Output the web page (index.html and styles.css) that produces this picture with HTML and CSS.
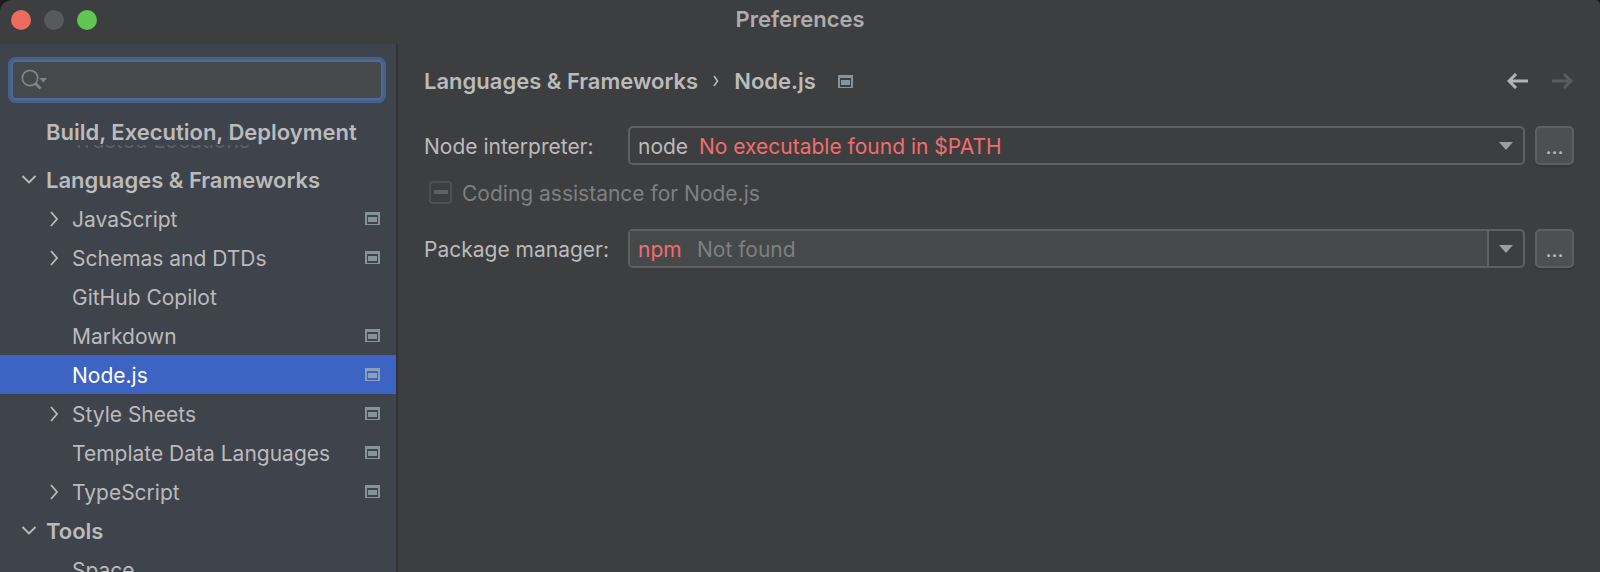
FILE: index.html
```html
<!DOCTYPE html>
<html lang="en">
<head>
<meta charset="utf-8">
<title>Preferences</title>
<link rel="stylesheet" href="styles.css">
</head>
<body>
<svg class="symbols" aria-hidden="true">
  <symbol id="project" viewBox="0 0 15 13"><path fill-rule="evenodd" d="M0 0h15v13H0zM2 3v9h11V3z"/><path d="M3 5h9v5H3z"/></symbol>
  <symbol id="right" viewBox="0 0 14 16"><path d="M4 1l6 7-6 7" fill="none" stroke="currentColor" stroke-width="1.800"/></symbol>
  <symbol id="down" viewBox="0 0 16 14"><path d="M1.500 4l6.500 6.500L14.500 4" fill="none" stroke="currentColor" stroke-width="1.800"/></symbol>
</svg>
<div class="window">
  <header class="titlebar">
    <div class="lights">
      <button class="light close" aria-label="Close"></button>
      <button class="light minimize" aria-label="Minimize" disabled></button>
      <button class="light maximize" aria-label="Zoom"></button>
    </div>
    <h1 class="title">Preferences</h1>
  </header>
  <div class="body">
    <aside class="sidebar">
      <div class="search">
        <svg class="search-icon" viewBox="0 0 28 22" aria-hidden="true"><circle cx="9" cy="9" r="7.700" fill="none" stroke="currentColor" stroke-width="1.700"/><path d="M14.500 14.500l5 5" stroke="currentColor" stroke-width="2.600"/><path d="M18.500 9h7.500l-3.750 4.500z" fill="currentColor"/></svg>
        <input class="search-input" type="text" aria-label="Search settings">
      </div>
      <nav class="tree" aria-label="Settings">
        <div class="sticky">Build, Execution, Deployment</div>
        <ul class="rows">
          <li class="row leaf faded"><a href="#">Trusted Locations</a></li>
          <li class="row group"><svg class="arrow-down"><use href="#down"/></svg><a href="#">Languages &amp; Frameworks</a></li>
          <li class="row leaf"><svg class="arrow-right"><use href="#right"/></svg><a href="#">JavaScript</a><svg class="project"><use href="#project"/></svg></li>
          <li class="row leaf"><svg class="arrow-right"><use href="#right"/></svg><a href="#">Schemas and DTDs</a><svg class="project"><use href="#project"/></svg></li>
          <li class="row leaf"><a href="#">GitHub Copilot</a></li>
          <li class="row leaf"><a href="#">Markdown</a><svg class="project"><use href="#project"/></svg></li>
          <li class="row leaf selected"><a href="#" aria-current="page">Node.js</a><svg class="project"><use href="#project"/></svg></li>
          <li class="row leaf"><svg class="arrow-right"><use href="#right"/></svg><a href="#">Style Sheets</a><svg class="project"><use href="#project"/></svg></li>
          <li class="row leaf"><a href="#">Template Data Languages</a><svg class="project"><use href="#project"/></svg></li>
          <li class="row leaf"><svg class="arrow-right"><use href="#right"/></svg><a href="#">TypeScript</a><svg class="project"><use href="#project"/></svg></li>
          <li class="row group"><svg class="arrow-down"><use href="#down"/></svg><a href="#">Tools</a></li>
          <li class="row leaf"><a href="#">Space</a></li>
        </ul>
      </nav>
    </aside>
    <main class="content">
      <div class="heading">
        <a class="crumb" href="#">Languages &amp; Frameworks</a>
        <svg class="crumb-sep" viewBox="0 0 6 12" aria-hidden="true"><path d="M1 1l3.500 5L1 11" fill="none" stroke="currentColor" stroke-width="1.600"/></svg>
        <h2 class="crumb">Node.js</h2>
        <svg class="project crumb-project"><use href="#project"/></svg>
        <div class="history">
          <button class="nav" aria-label="Back"><svg viewBox="0 0 22 16"><path d="M21 8H2M9 1L2 8l7 7" fill="none" stroke="currentColor" stroke-width="3"/></svg></button>
          <button class="nav" aria-label="Forward" disabled><svg viewBox="0 0 22 16"><path d="M1 8h19M13 1l7 7-7 7" fill="none" stroke="currentColor" stroke-width="3"/></svg></button>
        </div>
      </div>
      <form class="form">
        <label for="node">Node interpreter:</label>
        <div class="combo">
          <select id="node"><option>node</option></select>
          <span class="hint error">No executable found in $PATH</span>
          <svg class="caret" viewBox="0 0 14 8"><path d="M0 0h14L7 8z"/></svg>
        </div>
        <button class="more" type="button" aria-label="Browse interpreters">...</button>
        <div class="check">
          <input type="checkbox" id="assist" disabled>
          <label for="assist">Coding assistance for Node.js</label>
        </div>
        <label for="pm">Package manager:</label>
        <div class="combo">
          <input id="pm" type="text" value="npm">
          <span class="hint muted">Not found</span>
          <button class="open" type="button" aria-label="Show package managers"><svg viewBox="0 0 14 8"><path d="M0 0h14L7 8z"/></svg></button>
        </div>
        <button class="more" type="button" aria-label="Browse package managers">...</button>
      </form>
    </main>
  </div>
</div>
</body>
</html>
```
FILE: styles.css
```css
* { box-sizing: border-box; }
body { margin: 0; background: #1c1c1d; }
body, input, select, button { font: 400 21px/26px Inter, "Liberation Sans", sans-serif; color: #bbbbbb; }
button { padding: 0; border: 0; background: none; }
a { color: inherit; text-decoration: none; }
h1, h2 { margin: 0; font: inherit; }
.symbols { display: none; }

.window { display: flex; flex-direction: column; height: 100vh; overflow: hidden; background: #3d3e40; border-radius: 12px 5px 0 0; }
.titlebar { position: relative; flex: none; height: 44px; padding-bottom: 6px; display: flex; align-items: center; justify-content: center; }
.title, .sticky, .group, .heading { font-size: 22px; font-weight: 600; }
.title { color: #adadae; }
.lights { position: absolute; left: 11px; top: 10px; display: flex; gap: 13px; }
.light { width: 20px; height: 20px; border-radius: 50%; }
.close { background: #ed6a5e; }
.minimize { background: #58595b; }
.maximize { background: #61c554; }

.body { flex: 1; min-height: 0; display: flex; }
.sidebar { flex: none; width: 398px; background: #3f434c; border-right: 2px solid #323232; overflow: hidden; }
.search { display: flex; align-items: center; height: 36px; margin: 18px 15px 0 13px; padding-left: 8px; background: #454949; border-radius: 3px; box-shadow: 0 0 0 2px #4a6b96, 0 0 0 5px #466088; }
.search-icon { width: 28px; height: 22px; color: #7d868c; }
.search-input { flex: 1; min-width: 0; border: 0; outline: 0; background: none; }
.tree { margin-top: 19px; position: relative; }
.sticky { position: relative; z-index: 1; height: 28px; padding-left: 46px; line-height: 30px; background: #3f434c; }
.rows { list-style: none; margin: -24px 0 0; padding: 0; }
.row { position: relative; display: flex; align-items: center; height: 39px; padding: 0 16px 0 72px; white-space: nowrap; }
.row a { flex: 1; }
.leaf a { padding-top: 3px; }
.group { padding-left: 46px; }
.faded { color: #5c6068; }
.faded a { padding-top: 0; }
.selected { background: #3d63c3; color: #ffffff; }
.project { width: 15px; height: 13px; fill: #87939a; }
.row .project { margin-bottom: 1px; }
.selected .project { fill: #8b9dbb; }
.arrow-right { position: absolute; left: 47px; width: 14px; height: 16px; }
.arrow-down { position: absolute; left: 21px; top: 12px; width: 16px; height: 14px; }

.content { flex: 1; min-width: 0; padding: 24px 26px 0; }
.heading { display: flex; align-items: center; height: 26px; }
.crumb-sep { width: 6px; height: 12px; margin: 0 15px; }
.crumb-project { margin-left: 22px; }
.history { margin: 0 1px 0 auto; display: flex; gap: 22px; }
.nav { display: flex; color: #b2b3b5; }
.nav:disabled { color: #5b5c5d; }
.nav svg { width: 22px; height: 16px; }

.form { display: grid; grid-template-columns: 194px 1fr 39px; column-gap: 10px; align-items: center; margin-top: 32px; }
.form label { padding-top: 2px; }
.combo { position: relative; display: flex; height: 39px; border: 2px solid #5e6061; border-radius: 5px; }
.combo select, .combo input { flex: 1; min-width: 0; padding: 2px 8px 0; border: 0; outline: 0; appearance: none; background: none; }
.combo input { background: #454949; color: #f26d6b; }
.hint { position: absolute; top: 6px; left: 69px; pointer-events: none; }
.error { color: #f26d6b; }
.muted { left: 67px; color: #7f8080; }
.caret { position: absolute; right: 10px; top: 14px; width: 14px; height: 8px; fill: #9b9ea3; pointer-events: none; }
.open { width: 36px; border-left: 2px solid #5e6061; }
.open svg { display: block; margin: 0 auto; width: 14px; height: 8px; fill: #9b9ea3; }
.more { height: 39px; padding-top: 2px; border: 2px solid #5e6060; border-radius: 5px; background: #4c5052; box-shadow: 0 2px 1px #37383a; }
.check { grid-column: 1 / -1; display: flex; align-items: center; gap: 10px; height: 26px; margin: 14px 0 24px 5px; color: #7f8080; }
.form .check label { padding-top: 3px; }
.check input { appearance: none; display: grid; place-items: center; margin: 0; width: 23px; height: 23px; border: 2px solid #4f5051; border-radius: 4px; }
.check input::before { content: ""; width: 14px; height: 4px; border-radius: 1px; background: #606162; }
```
